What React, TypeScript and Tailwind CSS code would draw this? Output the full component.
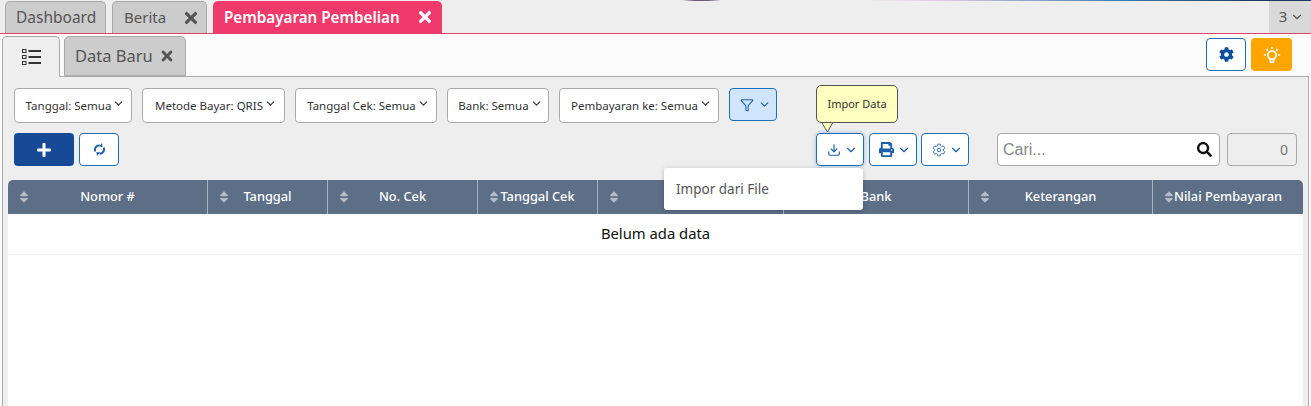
import React from 'react';
import { FaCog, FaPlus, FaPrint, FaSearch, FaSort, FaTimes } from 'react-icons/fa';
import { IoSettingsOutline } from 'react-icons/io5';
import { ChevronDown, Download, Funnel } from 'lucide-react';
import { TbBulb } from 'react-icons/tb';

const filters = [
  { label: 'Tanggal: Semua', w: 'w-[118px]' },
  { label: 'Metode Bayar: QRIS', w: 'w-[143px]' },
  { label: 'Tanggal Cek: Semua', w: 'w-[142px]' },
  { label: 'Bank: Semua', w: 'w-[102px]' },
  { label: 'Pembayaran ke: Semua', w: 'w-[160px]' },
];

const columns = [
  { label: 'Nomor #', w: 'w-[200px]' },
  { label: 'Tanggal', w: 'w-[120px]' },
  { label: 'No. Cek', w: 'w-[150px]' },
  { label: 'Tanggal Cek', w: 'w-[120px]' },
  { label: '', w: 'w-[186px]' },
  { label: 'Bank', w: 'w-[185px]' },
  { label: 'Keterangan', w: 'w-[184px]' },
  { label: 'Nilai Pembayaran', w: 'flex-1' },
];

function ListIcon() {
  return (
    <svg width="19" height="18" viewBox="0 0 19 18" fill="none" stroke="#333" strokeWidth="1">
      <rect x="0.5" y="1.5" width="3.5" height="3" />
      <rect x="0.5" y="7.5" width="3.5" height="3" />
      <rect x="0.5" y="13.5" width="3.5" height="3" />
      <path d="M6.5 3H19M6.5 9H19M6.5 15H19" strokeWidth="1.8" />
    </svg>
  );
}

function RefreshIcon() {
  return (
    <svg width="13" height="13" viewBox="0 0 13 13" fill="none" stroke="currentColor" strokeWidth="2">
      <path d="M2.2 8.5C1 5.5 3 2.5 6.5 2.2" />
      <path d="M10.8 4.5C12 7.5 10 10.5 6.5 10.8" />
      <path d="M9 0l.6 4-3.6-.4zM4 13l-.6-4 3.6.4z" fill="currentColor" stroke="none" />
    </svg>
  );
}

function ToolButton({ children }: { children: React.ReactNode }) {
  return (
    <button className="flex h-[33px] w-[48px] items-center justify-center gap-[3px] rounded-[4px] border border-[#1d6fb8] bg-white pl-[4px] text-[#1d5fa8]">
      {children}
      <ChevronDown size={14} strokeWidth={2} />
    </button>
  );
}

const App: React.FC = () => {
  return (
    <div className="relative flex h-[406px] w-[1311px] flex-col overflow-hidden bg-[#eeeeee] font-['Noto_Sans','Open_Sans',sans-serif] text-[13px]">
      <div className="absolute left-0 top-0 h-px w-full bg-[linear-gradient(90deg,transparent_52%,#6b5a78_53%,#6b5a78_54%,transparent_55%,transparent_66%,#e0c8e0_72%,#3f7fb0_85%,#1d3a5c_96%)]" />

      {/* tab utama */}
      <div className="flex h-[33px] shrink-0 items-end pl-[5px]">
        <div className="flex h-[32px] w-[101px] items-center rounded-t-[5px] border border-b-0 border-[#aaaaaa] bg-[#cccccc] pl-[10px] text-[15.5px] text-[#555555]">
          Dashboard
        </div>
        <div className="ml-[6px] flex h-[32px] w-[95px] items-center justify-between rounded-t-[5px] border border-b-0 border-[#aaaaaa] bg-[#cccccc] pl-[11px] pr-[6px] text-[15px] text-[#555555]">
          Berita
          <FaTimes size={18} />
        </div>
        <div className="ml-[6px] flex h-[32px] w-[229px] items-center justify-between rounded-t-[5px] bg-[#ef3a6b] pl-[11px] pr-[8px] text-[15.2px] font-semibold text-white">
          Pembayaran Pembelian
          <FaTimes size={18} />
        </div>
        <div className="ml-auto flex h-[33px] w-[42px] items-center justify-center gap-[3px] bg-[#d9d9d9] pl-[3px] text-[15px] text-[#555555]">
          3
          <ChevronDown size={14} />
        </div>
      </div>

      <div className="flex min-h-0 flex-1 flex-col border-t border-[#e0406f] bg-[#fbfbfb] px-[2px]">
        {/* sub tab */}
        <div className="flex h-[43px] shrink-0 items-end border-b border-[#aaaaaa] pt-[2px]">
          <div className="-mb-px flex h-[41px] w-[58px] items-center justify-center rounded-t-[5px] border border-b-0 border-[#aaaaaa] bg-[#eeeeee]">
            <ListIcon />
          </div>
          <div className="ml-[4px] flex h-[40px] w-[122px] items-center justify-between rounded-t-[5px] border border-[#aaaaaa] bg-[#cccccc] pl-[10px] pr-[10px] text-[16.5px] text-[#555555]">
            Data Baru
            <FaTimes size={16} />
          </div>
          <div className="mb-[5px] ml-auto mr-[17px] flex gap-[5px]">
            <button className="flex h-[33px] w-[40px] items-center justify-center rounded-[4px] border border-[#1d6fb8] bg-white text-[#0d4f9e]">
              <FaCog size={15} />
            </button>
            <button className="flex h-[33px] w-[41px] items-center justify-center rounded-[4px] bg-[#ffa500] text-white">
              <TbBulb size={20} />
            </button>
          </div>
        </div>

        {/* isi */}
        <div className="flex min-h-0 flex-1 flex-col border-x border-[#aaaaaa] bg-[#eeeeee]">
          <div className="flex gap-[10px] pl-[11px] pt-[11px]">
            {filters.map((f) => (
              <button
                key={f.label}
                className={`flex h-[35px] ${f.w} items-center justify-center gap-[1px] rounded-[4px] border border-[#aaaaaa] bg-white pl-[5px] text-[11.5px] text-[#333333]`}
              >
                {f.label}
                <ChevronDown size={13} strokeWidth={2} className="-mt-[4px] shrink-0" />
              </button>
            ))}
            <button className="flex h-[33px] w-[48px] items-center justify-center gap-[4px] rounded-[4px] border border-[#1d6fb8] bg-[#cfe5fc] pl-[4px] text-[#1d5fa8]">
              <Funnel size={14} strokeWidth={1.8} />
              <ChevronDown size={13} strokeWidth={2} />
            </button>
          </div>

          <div className="flex items-center pl-[11px] pt-[10px]">
            <button className="flex h-[33px] w-[60px] items-center justify-center rounded-[4px] bg-[#164a97] text-white">
              <FaPlus size={16} />
            </button>
            <button className="ml-[5px] flex h-[33px] w-[40px] items-center justify-center rounded-[4px] border border-[#1d6fb8] bg-white text-[#1d5fa8]">
              <RefreshIcon />
            </button>
            <div className="ml-[697px] flex">
              <div className="rounded-[4px] shadow-[0_0_4px_rgba(29,111,184,0.4)]">
                <ToolButton>
                  <Download size={14} strokeWidth={2} />
                </ToolButton>
              </div>
              <div className="ml-[5px]">
                <ToolButton>
                  <FaPrint size={15} />
                </ToolButton>
              </div>
              <div className="ml-[4px]">
                <ToolButton>
                  <IoSettingsOutline size={14} />
                </ToolButton>
              </div>
            </div>
            <div className="ml-[28px] flex h-[33px] w-[223px] items-center justify-between rounded-[4px] border border-[#aaaaaa] bg-white pl-[5px] pr-[7px] font-['Liberation_Sans',sans-serif] text-[16px] text-[#888888]">
              Cari...
              <FaSearch size={15} className="text-[#111111]" />
            </div>
            <div className="ml-[7px] flex h-[33px] w-[70px] items-center justify-end rounded-[4px] border border-[#aaaaaa] bg-[#eeeeee] pr-[8px] text-[14px] text-[#777777]">
              0
            </div>
          </div>

          {/* tabel */}
          <div className="mx-[5px] mt-[14px] flex min-h-0 flex-1 flex-col">
            <div className="flex h-[34px] shrink-0 rounded-t-[5px] bg-[#5c6f86] text-[12.8px] font-medium text-white">
              {columns.map((c, i) => (
                <div
                  key={i}
                  className={`relative flex ${c.w} items-center justify-center ${i < columns.length - 1 ? 'border-r border-[#a8b3c0]' : ''}`}
                >
                  {c.label !== 'Bank' && (
                    <FaSort size={14} className="absolute left-[9px] top-[10px] text-[#b4bcc7]" />
                  )}
                  {c.label}
                </div>
              ))}
            </div>
            <div className="flex-1 bg-white">
              <div className="flex h-[41px] items-center justify-center border-b border-[#eeeeee] pb-[2px] text-[14.8px] text-[#111111]">
                Belum ada data
              </div>
            </div>
          </div>
        </div>
      </div>

      {/* tooltip */}
      <div className="absolute left-[816px] top-[85px] flex h-[38px] w-[82px] items-center justify-center rounded-[5px] border border-[#555555] bg-[#ffffc0] text-[11px] text-[#333333]">
        Impor Data
        <svg className="absolute left-[5px] top-[36px]" width="12" height="11" viewBox="0 0 12 11">
          <path d="M0 1l5.5 9 5-9" fill="#ffffc0" stroke="#555555" />
        </svg>
      </div>

      {/* dropdown */}
      <div className="absolute left-[664px] top-[168px] flex h-[42px] w-[199px] items-center rounded-[3px] bg-white pl-[12px] text-[13.5px] text-[#555555] shadow-[0_1px_5px_rgba(0,0,0,0.22)]">
        Impor dari File
      </div>
    </div>
  );
};

export default App;
